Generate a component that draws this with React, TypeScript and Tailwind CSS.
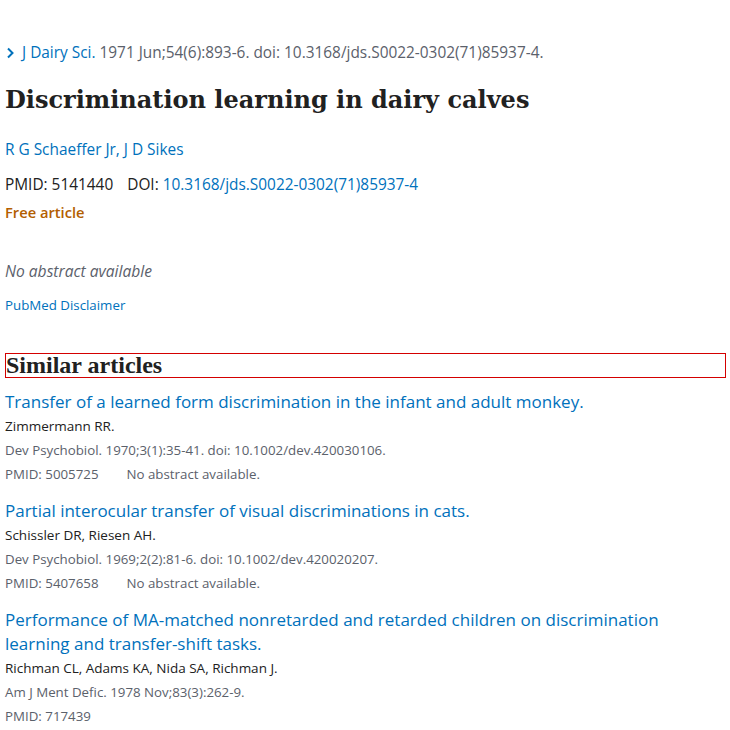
import React from 'react'

const SANS = { fontFamily: '"Open Sans", "Noto Sans", sans-serif' }

const SIMILAR = [
  {
    title: 'Transfer of a learned form discrimination in the infant and adult monkey.',
    authors: 'Zimmermann RR.',
    cite: 'Dev Psychobiol. 1970;3(1):35-41. doi: 10.1002/dev.420030106.',
    pmid: '5005725',
    note: 'No abstract available.',
  },
  {
    title: 'Partial interocular transfer of visual discriminations in cats.',
    authors: 'Schissler DR, Riesen AH.',
    cite: 'Dev Psychobiol. 1969;2(2):81-6. doi: 10.1002/dev.420020207.',
    pmid: '5407658',
    note: 'No abstract available.',
  },
  {
    title: 'Performance of MA-matched nonretarded and retarded children on discrimination learning and transfer-shift tasks.',
    authors: 'Richman CL, Adams KA, Nida SA, Richman J.',
    cite: 'Am J Ment Defic. 1978 Nov;83(3):262-9.',
    pmid: '717439',
    note: '',
  },
]

export default function App() {
  return (
    <div className="w-[730px] h-[730px] overflow-hidden bg-white px-[5px] pt-[43px] text-[#212121]" style={SANS}>
      {/* journal citation */}
      <div className="flex items-center text-[15.4px] leading-[20px] text-[#5b616b]">
        <svg width="9" height="12" viewBox="0 0 9 12" className="ml-[1px] mr-[7px]">
          <path d="M2 1.5 L6.5 6 L2 10.5" fill="none" stroke="#0071bc" strokeWidth="2" />
        </svg>
        <span className="text-[#0071bc]">J Dairy Sci.</span>
        <span>&nbsp;1971 Jun;54(6):893-6. doi: 10.3168/jds.S0022-0302(71)85937-4.</span>
      </div>

      <h1
        className="mt-[19px] text-[24px] leading-[36px] font-bold text-[#212121]"
        style={{ fontFamily: '"DejaVu Serif", serif' }}
      >
        Discrimination learning in dairy calves
      </h1>

      <div className="mt-[22px] text-[15.4px] leading-[20px] text-[#0071bc]">R G Schaeffer Jr, J D Sikes</div>

      <div className="mt-[15px] text-[15.4px] leading-[20px]">
        <span>PMID: 5141440</span>
        <span className="ml-[14px]">DOI: </span>
        <span className="text-[#0071bc]">10.3168/jds.S0022-0302(71)85937-4</span>
      </div>
      <div className="mt-[7px] text-[14.7px] leading-[20px] font-semibold text-[#b35e00]">Free article</div>

      <div className="mt-[39px] text-[15.6px] leading-[20px] italic text-[#5b616b]">No abstract available</div>
      <div className="mt-[15px] text-[13.3px] leading-[18px] text-[#0071bc]">PubMed Disclaimer</div>

      <h2
        className="mt-[39px] w-[721px] h-[25px] border border-[#d40000] text-[24px] leading-[22px] font-bold text-[#212121]"
        style={{ fontFamily: '"Liberation Serif", serif' }}
      >
        Similar articles
      </h2>

      <div className="mt-[12px] flex flex-col gap-[13px]">
        {SIMILAR.map((a) => (
          <div key={a.pmid}>
            <div className="text-[17px] leading-[24px] text-[#0071bc] pr-[60px]">{a.title}</div>
            <div className="text-[13.5px] leading-[24px] text-[#212121]">{a.authors}</div>
            <div className="text-[13.3px] leading-[24px] text-[#5b616b]">{a.cite}</div>
            <div className="text-[13.3px] leading-[24px] text-[#5b616b]">
              <span>PMID: {a.pmid}</span>
              {a.note && <span className="ml-[28px]">{a.note}</span>}
            </div>
          </div>
        ))}
      </div>
    </div>
  )
}
